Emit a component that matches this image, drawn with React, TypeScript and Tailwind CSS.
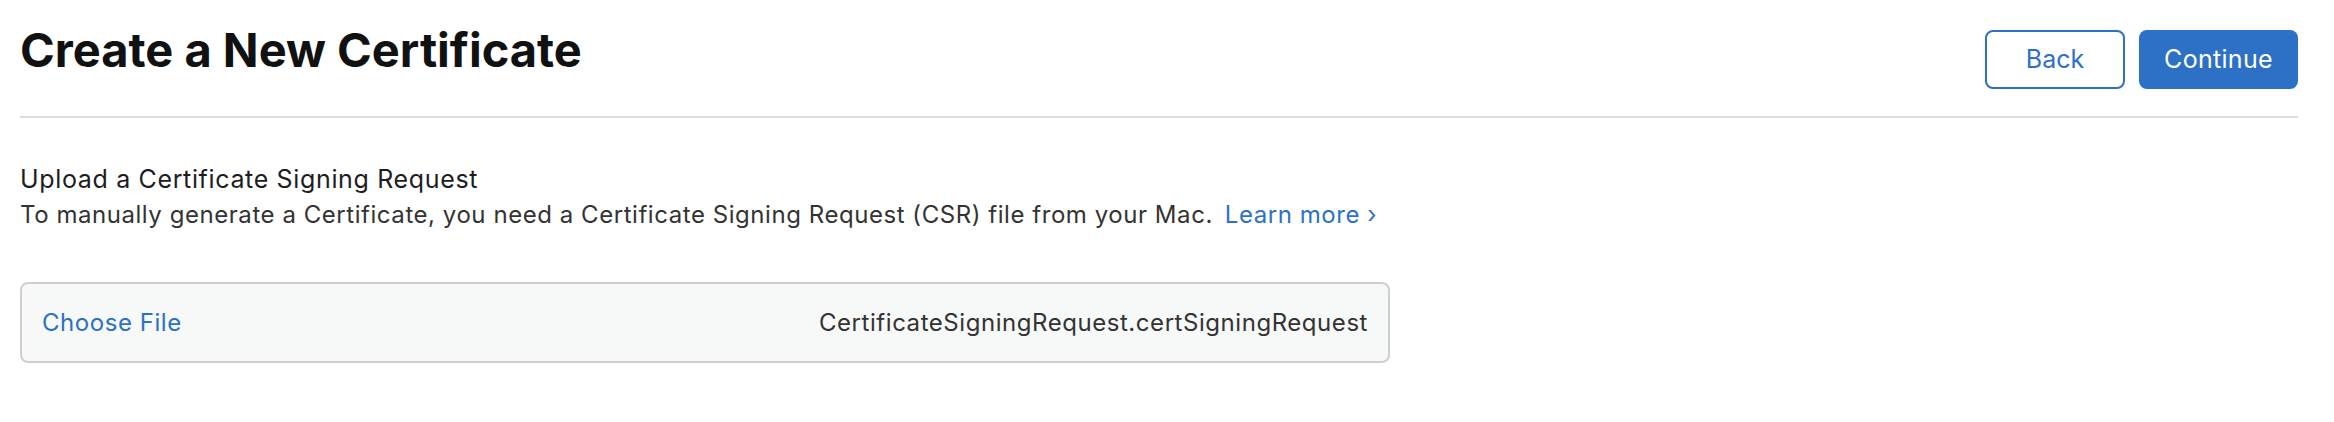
export default function App() {
  return (
    <div className="min-h-[422px] w-full bg-white pl-[20px] pr-[36px] font-['Inter','Noto_Sans',sans-serif] text-[#333333]">
      {/* Header */}
      <div className="flex items-start justify-between border-b-2 border-[#dcdcdc] pb-[27px]">
        <h1 className="mt-[22px] text-[47px] font-bold leading-[56px] text-[#111111]">
          Create a New Certificate
        </h1>
        <div className="mt-[30px] flex gap-[14px]">
          <button className="h-[59px] w-[140px] rounded-[8px] border-2 border-[#2c71c6] bg-white text-[25px] text-[#2c71c6]">
            Back
          </button>
          <button className="h-[59px] w-[159px] rounded-[8px] bg-[#2c71c6] text-[25px] tracking-[0.3px] text-white">
            Continue
          </button>
        </div>
      </div>

      {/* CSR upload */}
      <div className="mt-[44px] text-[24px] leading-[35px] tracking-[0.55px]">
        <p className="text-[25px] tracking-[0.65px] text-[#1d1d1f]">Upload a Certificate Signing Request</p>
        <p>
          To manually generate a Certificate, you need a Certificate Signing Request (CSR) file from your Mac.
          <a href="#" className="ml-[12px] text-[#2c71c6]">
            Learn more ›
          </a>
        </p>
      </div>

      <div className="mt-[50px] flex h-[81px] w-[1370px] items-center justify-between rounded-[8px] border-2 border-[#cfcfcf] bg-[#f7f8f8] px-[20px] text-[24px] tracking-[0.55px]">
        <span className="text-[#2c71c6]">Choose File</span>
        <span className="text-[#333333]">CertificateSigningRequest.certSigningRequest</span>
      </div>
    </div>
  );
}
